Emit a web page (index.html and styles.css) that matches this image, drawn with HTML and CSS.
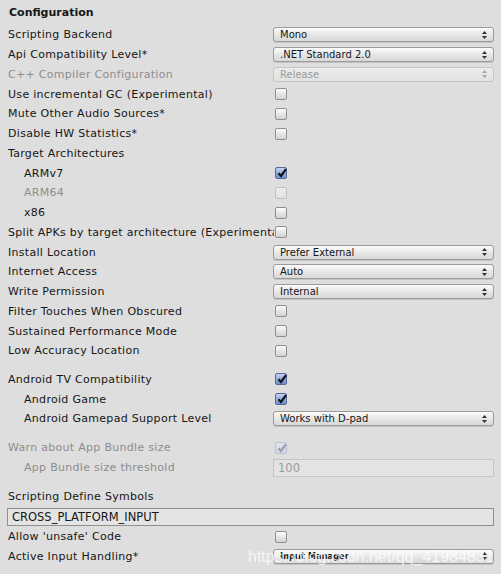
FILE: index.html
```html
<!DOCTYPE html>
<html lang="en">
<head>
    <meta charset="UTF-8" />
    <title>Player Settings - Configuration</title>
    <link rel="stylesheet" href="styles.css">
</head>
<body>

<div class="panel">
    <div class="header">Configuration</div>

    <div class="rows">
        <div class="row">
            <span class="label">Scripting Backend</span>
            <div class="popup"><span>Mono</span><svg class="arrows" viewBox="0 0 5 8"><path d="M2.5 0L5 3H0z M2.5 8L5 5H0z"/></svg></div>
        </div>
        <div class="row">
            <span class="label">Api Compatibility Level*</span>
            <div class="popup"><span>.NET Standard 2.0</span><svg class="arrows" viewBox="0 0 5 8"><path d="M2.5 0L5 3H0z M2.5 8L5 5H0z"/></svg></div>
        </div>
        <div class="row disabled">
            <span class="label">C++ Compiler Configuration</span>
            <div class="popup"><span>Release</span><svg class="arrows" viewBox="0 0 5 8"><path d="M2.5 0L5 3H0z M2.5 8L5 5H0z"/></svg></div>
        </div>
        <div class="row">
            <span class="label">Use incremental GC (Experimental)</span>
            <span class="check"></span>
        </div>
        <div class="row">
            <span class="label">Mute Other Audio Sources*</span>
            <span class="check"></span>
        </div>
        <div class="row">
            <span class="label">Disable HW Statistics*</span>
            <span class="check"></span>
        </div>
        <div class="row">
            <span class="label">Target Architectures</span>
        </div>
        <div class="row indent">
            <span class="label">ARMv7</span>
            <span class="check on"><svg viewBox="0 0 12 12"><path d="M2.5 6.2L5 9L10 2.2" /></svg></span>
        </div>
        <div class="row indent disabled">
            <span class="label">ARM64</span>
            <span class="check"></span>
        </div>
        <div class="row indent">
            <span class="label">x86</span>
            <span class="check"></span>
        </div>
        <div class="row">
            <span class="label">Split APKs by target architecture (Experimental)</span>
            <span class="check"></span>
        </div>
        <div class="row">
            <span class="label">Install Location</span>
            <div class="popup"><span>Prefer External</span><svg class="arrows" viewBox="0 0 5 8"><path d="M2.5 0L5 3H0z M2.5 8L5 5H0z"/></svg></div>
        </div>
        <div class="row">
            <span class="label">Internet Access</span>
            <div class="popup"><span>Auto</span><svg class="arrows" viewBox="0 0 5 8"><path d="M2.5 0L5 3H0z M2.5 8L5 5H0z"/></svg></div>
        </div>
        <div class="row">
            <span class="label">Write Permission</span>
            <div class="popup"><span>Internal</span><svg class="arrows" viewBox="0 0 5 8"><path d="M2.5 0L5 3H0z M2.5 8L5 5H0z"/></svg></div>
        </div>
        <div class="row">
            <span class="label">Filter Touches When Obscured</span>
            <span class="check"></span>
        </div>
        <div class="row">
            <span class="label">Sustained Performance Mode</span>
            <span class="check"></span>
        </div>
        <div class="row">
            <span class="label">Low Accuracy Location</span>
            <span class="check"></span>
        </div>
    </div>

    <div class="rows group">
        <div class="row">
            <span class="label">Android TV Compatibility</span>
            <span class="check on"><svg viewBox="0 0 12 12"><path d="M2.5 6.2L5 9L10 2.2" /></svg></span>
        </div>
        <div class="row indent">
            <span class="label">Android Game</span>
            <span class="check on"><svg viewBox="0 0 12 12"><path d="M2.5 6.2L5 9L10 2.2" /></svg></span>
        </div>
        <div class="row indent">
            <span class="label">Android Gamepad Support Level</span>
            <div class="popup"><span>Works with D-pad</span><svg class="arrows" viewBox="0 0 5 8"><path d="M2.5 0L5 3H0z M2.5 8L5 5H0z"/></svg></div>
        </div>
    </div>

    <div class="rows group bundle disabled">
        <div class="row">
            <span class="label">Warn about App Bundle size</span>
            <span class="check on"><svg viewBox="0 0 12 12"><path d="M2.5 6.2L5 9L10 2.2" /></svg></span>
        </div>
        <div class="row indent">
            <span class="label">App Bundle size threshold</span>
            <div class="field">100</div>
        </div>
    </div>

    <div class="rows group defines">
        <div class="row">
            <span class="label">Scripting Define Symbols</span>
        </div>
        <div class="wide-field">CROSS_PLATFORM_INPUT</div>
        <div class="row">
            <span class="label">Allow 'unsafe' Code</span>
            <span class="check"></span>
        </div>
        <div class="row last">
            <span class="label">Active Input Handling*</span>
            <div class="popup small"><span>Input Manager</span><svg class="arrows" viewBox="0 0 5 8"><path d="M2.5 0L5 3H0z M2.5 8L5 5H0z"/></svg></div>
            <span class="watermark">https://blog.csdn.net/qq_41984831</span>
        </div>
    </div>
</div>

</body>
</html>
```

FILE: styles.css
```css
body {
    margin: 0;
    background-color: #dedede;
    font-family: "DejaVu Sans", sans-serif;
    font-size: 11px;
    color: #161616;
}

.panel {
    padding: 4px 7px 0 8px;
}

.header {
    height: 21px;
    line-height: 18px;
    font-weight: bold;
    padding-left: 1px;
}

.rows {
    display: flex;
    flex-direction: column;
}

.group {
    margin-top: 8.8px;
}

.group.bundle {
    margin-top: 9.2px;
}

.group.defines {
    margin-top: 9.6px;
}

.row {
    position: relative;
    display: grid;
    grid-template-columns: 266px 1fr;
    align-items: center;
    height: 19.75px;
}

.label {
    white-space: nowrap;
    overflow: hidden;
    letter-spacing: 0.3px;
}

.indent .label {
    padding-left: 16px;
}

.disabled .label {
    color: #8d8d8d;
}

/* popup menus */
.popup {
    display: flex;
    align-items: center;
    justify-content: space-between;
    height: 13px;
    margin-left: -1px;
    padding: 0 6px 0 6px;
    border: 1px solid #9b9b9b;
    border-radius: 3px;
    background: linear-gradient(#fbfbfb, #e4e4e4 60%, #d8d8d8);
    box-shadow: 0 1px 0 rgba(0, 0, 0, 0.12);
    font-size: 10px;
}

.arrows {
    width: 5px;
    height: 8px;
    fill: #333;
}

.disabled .popup {
    border-color: #c6c6c6;
    background: linear-gradient(#ececec, #e2e2e2);
    box-shadow: none;
    color: #9a9a9a;
}

.disabled .popup .arrows {
    fill: #a8a8a8;
}

.popup.small span {
    font-size: 8px;
    font-weight: bold;
    letter-spacing: 0.2px;
}

/* checkboxes */
.check {
    position: relative;
    width: 12px;
    height: 12px;
    margin-left: 1px;
    border: 1px solid #8e8e8e;
    border-radius: 2px;
    background: linear-gradient(#fdfdfd, #e6e6e6 50%, #d3d3d3);
    box-sizing: border-box;
}

.check svg {
    position: absolute;
    left: 0;
    top: -1px;
    width: 12px;
    height: 12px;
    fill: none;
    stroke: #111;
    stroke-width: 2.2;
}

.check.on {
    border-color: #56699a;
    background: linear-gradient(#c4d4ef, #8ea9d9 55%, #6f8ecb);
}

.disabled .check {
    border-color: #c0c0c0;
    background: linear-gradient(#efefef, #e1e1e1);
}

.disabled .check.on {
    border-color: #b7bfd0;
    background: linear-gradient(#dfe5f0, #cfd8e8);
}

.disabled .check svg {
    stroke: #9aa0a8;
}

/* text fields */
.field {
    height: 16px;
    line-height: 16px;
    margin-left: -1px;
    padding-left: 4px;
    border: 1px solid #c4c4c4;
    background-color: #e3e3e3;
    color: #9a9a9a;
    font-size: 11.5px;
}

.wide-field {
    height: 16px;
    line-height: 16px;
    margin: 1px 0 1px -1px;
    padding-left: 4px;
    border: 1px solid #8f8f8f;
    background-color: #e4e4e4;
    font-size: 11.5px;
}

.watermark {
    position: absolute;
    left: 240px;
    top: 1px;
    font-family: "Liberation Sans", sans-serif;
    font-size: 16px;
    color: rgba(255, 255, 255, 0.75);
    white-space: nowrap;
    pointer-events: none;
}
```
